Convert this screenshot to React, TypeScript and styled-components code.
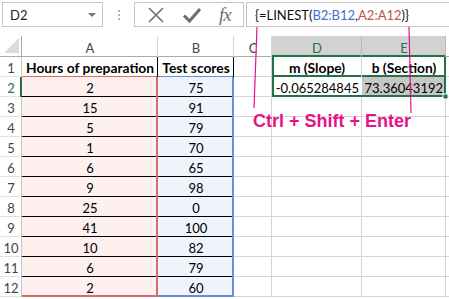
import React from 'react';
import styled, { createGlobalStyle } from 'styled-components';

const GlobalStyle = createGlobalStyle`
    html, body {
        margin: 0;
        padding: 0;
        background: #fff;
        overflow: hidden;
    }
    body {
        font-family: Lato, "Liberation Sans", sans-serif;
    }
`;

const GREEN = '#217346';
const GRID = '#d4d4d4';
const RED = '#d46d6a';
const BLUE = '#6a8bd6';

const Page = styled.div`
    position: relative;
    width: 449px;
    height: 299px;
    overflow: hidden;
    background: #fff;
`;

// formula bar
const Toolbar = styled.div`
    display: flex;
    align-items: flex-start;
    height: 36px;
    padding: 2px 0 0 2px;
    box-sizing: border-box;
    & > * {
        flex-shrink: 0;
    }
`;

const NameBox = styled.div`
    width: 101px;
    height: 25px;
    box-sizing: border-box;
    border: 1px solid #c6c6c6;
    display: flex;
    align-items: center;
    justify-content: space-between;
    padding: 0 6px 0 7px;
    font-size: 13px;
    color: #222;
`;

const Caret = styled.span`
    width: 0;
    height: 0;
    border-left: 4px solid transparent;
    border-right: 4px solid transparent;
    border-top: 4px solid #777;
`;

const Dots = styled.div`
    width: 31px;
    height: 25px;
    display: flex;
    flex-direction: column;
    align-items: center;
    justify-content: center;
    gap: 2px;
    span {
        width: 2px;
        height: 2px;
        background: #b4b4b4;
    }
`;

const Buttons = styled.div`
    width: 110px;
    height: 25px;
    box-sizing: border-box;
    border: 1px solid #c6c6c6;
    display: flex;
    align-items: center;
    justify-content: space-around;
    padding: 0 4px;
`;

const Fx = styled.span`
    font-family: "Liberation Serif", serif;
    font-style: italic;
    font-size: 19px;
    color: #6e6e6e;
    letter-spacing: -1px;
`;

const FormulaBox = styled.div`
    width: 230px;
    margin-left: 2px;
    height: 25px;
    box-sizing: border-box;
    border: 1px solid #c6c6c6;
    display: flex;
    align-items: center;
    padding-left: 8px;
    font-size: 13px;
    color: #111;
    white-space: nowrap;
`;

const Ref = styled.span<{ $color: string }>`
    color: ${p => p.$color};
`;

// sheet
const Sheet = styled.div`
    display: grid;
    grid-template-columns: 22px 136px 76px 38px 90px 84px 1fr;
    grid-template-rows: 21px repeat(12, 20px);
`;

type Edge = [number, string] | undefined;

function edges(r: Edge, b: Edge, l: Edge, t: Edge) {
    const s: string[] = [];
    if (r) s.push(`inset -${r[0]}px 0 0 ${r[1]}`);
    if (b) s.push(`inset 0 -${b[0]}px 0 ${b[1]}`);
    if (l) s.push(`inset ${l[0]}px 0 0 ${l[1]}`);
    if (t) s.push(`inset 0 ${t[0]}px 0 ${t[1]}`);
    return s.length ? s.join(', ') : 'none';
}

interface CellProps {
    $bg?: string;
    $align?: 'left' | 'center' | 'right';
    $bold?: boolean;
    $color?: string;
    $r?: Edge;
    $b?: Edge;
    $l?: Edge;
    $t?: Edge;
}

const Cell = styled.div<CellProps>`
    display: flex;
    align-items: center;
    justify-content: ${p => p.$align === 'right' ? 'flex-end' : p.$align === 'left' ? 'flex-start' : 'center'};
    padding: 1px 3px 0 3px;
    box-sizing: border-box;
    background: ${p => p.$bg || '#fff'};
    color: ${p => p.$color || '#000'};
    font-size: ${p => p.$bold ? '13.8px' : '13px'};
    font-weight: ${p => p.$bold ? 700 : 400};
    white-space: nowrap;
    overflow: hidden;
    box-shadow: ${p => edges(p.$r, p.$b, p.$l, p.$t)};
`;

const ColHead = styled(Cell)`
    color: ${p => p.$color || '#444'};
    padding-top: 2px;
`;

const RowHead = styled(Cell)`
    color: ${p => p.$color || '#444'};
    justify-content: center;
    padding: 1px 0 0 0;
`;

const Corner = styled.div`
    box-shadow: inset -1px -1px 0 #ababab;
    display: flex;
    align-items: flex-end;
    justify-content: flex-end;
    padding: 0 3px 4px 0;
    box-sizing: border-box;
    span {
        width: 0;
        height: 0;
        border-left: 15px solid transparent;
        border-bottom: 15px solid #dcdcdc;
    }
`;

// annotation drawn over the sheet
const Overlay = styled.svg`
    position: absolute;
    left: 0;
    top: 0;
    pointer-events: none;
`;

const Hint = styled.span`
    position: absolute;
    left: 253px;
    top: 111px;
    font-family: "Liberation Sans", Arial, sans-serif;
    font-weight: 700;
    font-size: 18px;
    color: #e8118a;
    white-space: nowrap;
    pointer-events: none;
`;

const hours = [2, 15, 5, 1, 6, 9, 25, 41, 10, 6, 2];
const scores = [75, 91, 79, 70, 65, 98, 0, 100, 82, 79, 60];

const grid: Edge = [1, GRID];

const App: React.FC = () => {
    // F sits past the right edge, its letter is off screen
    const letters = ['A', 'B', 'C', 'D', 'E', ''];

    return (
        <Page>
            <GlobalStyle />
            <Toolbar>
                <NameBox>D2<Caret /></NameBox>
                <Dots><span /><span /><span /></Dots>
                <Buttons>
                    <svg width="18" height="18" viewBox="0 0 18 18">
                        <path d="M2 2 L16 16 M16 2 L2 16" stroke="#6e6e6e" strokeWidth="1.6" fill="none" />
                    </svg>
                    <svg width="20" height="18" viewBox="0 0 20 18">
                        <path d="M2 9.5 L7.5 15 L18 3" stroke="#6e6e6e" strokeWidth="3" fill="none" />
                    </svg>
                    <Fx>fx</Fx>
                </Buttons>
                <FormulaBox>
                    {'{=LINEST('}<Ref $color="#3f6fc6">B2:B12</Ref>,<Ref $color="#c0504d">A2:A12</Ref>{')}'}
                </FormulaBox>
            </Toolbar>

            <Sheet>
                <Corner><span /></Corner>
                {letters.map((l, i) => {
                    const sel = l === 'D' || l === 'E';
                    return (
                        <ColHead key={i}
                            $bg={sel ? '#d2d2d2' : '#fff'}
                            $color={sel ? GREEN : undefined}
                            $r={[1, sel ? '#b9b9b9' : '#d4d4d4']}
                            $b={sel ? [2, GREEN] : [1, '#ababab']}>
                            {l}
                        </ColHead>
                    );
                })}

                {/* row 1 */}
                <RowHead $r={[1, '#c6c6c6']} $b={[1, '#e1e1e1']}>1</RowHead>
                <Cell $bold $r={[1, '#000']} $b={[1, RED]}>Hours of preparation</Cell>
                <Cell $bold $r={[1, '#000']} $b={[1, BLUE]}>Test scores</Cell>
                <Cell $r={grid} $b={grid} />
                <Cell $bold $l={[2, GREEN]} $r={grid} $b={[2, GREEN]}>m (Slope)</Cell>
                <Cell $bold $r={[2, GREEN]} $b={[2, GREEN]}>b (Section)</Cell>
                <Cell $r={grid} $b={grid} />

                {hours.map((h, i) => {
                    const row = i + 2;
                    const last = row === 12;
                    return (
                        <React.Fragment key={row}>
                            <RowHead
                                $color={row === 2 ? GREEN : undefined}
                                $r={row === 2 ? [2, GREEN] : [1, '#c6c6c6']}
                                $b={[1, '#e1e1e1']}>
                                {row}
                            </RowHead>
                            <Cell $bg="#fdf0ef" $r={[2, RED]} $b={last ? [2, RED] : [1, '#000']}>{h}</Cell>
                            <Cell $bg="#eef3fc" $r={[2, BLUE]} $b={last ? [2, BLUE] : [1, '#000']}>{scores[i]}</Cell>
                            <Cell $r={grid} $b={grid} />
                            {row === 2 ? (
                                <>
                                    <Cell $align="right" $l={[2, GREEN]} $b={[2, GREEN]}>-0.065284845</Cell>
                                    <Cell $align="right" $bg="#c6c6c6" $r={[2, GREEN]} $b={[2, GREEN]}>73.36043192</Cell>
                                </>
                            ) : (
                                <>
                                    <Cell $r={grid} $b={grid} />
                                    <Cell $r={grid} $b={grid} />
                                </>
                            )}
                            <Cell $r={grid} $b={grid} />
                        </React.Fragment>
                    );
                })}
            </Sheet>

            <Overlay width="449" height="299">
                <line x1="257" y1="27" x2="254" y2="108" stroke="#e8118a" strokeWidth="1.2" />
                <line x1="409" y1="27" x2="411" y2="113" stroke="#e8118a" strokeWidth="1.2" />
                <rect x="443" y="94" width="5" height="5" fill={GREEN} stroke="#fff" strokeWidth="1" />
            </Overlay>
            <Hint>Ctrl + Shift + Enter</Hint>
        </Page>
    );
};

export default App;
